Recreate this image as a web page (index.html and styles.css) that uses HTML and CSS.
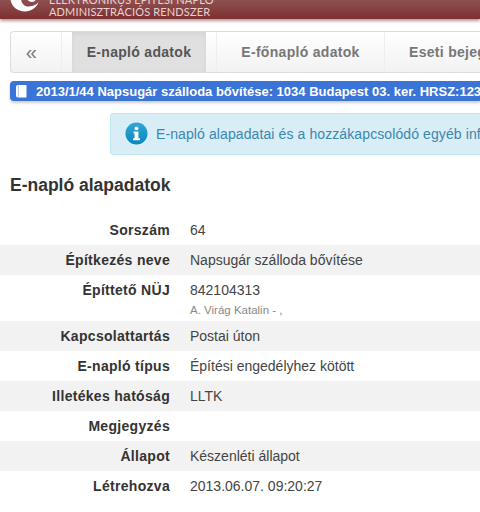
FILE: index.html
```html
<!DOCTYPE html>
<html lang="hu">
<head>
<meta charset="utf-8">
<title>E-napló adatok</title>
<link rel="stylesheet" href="styles.css">
</head>
<body>
<header class="topbar">
  <svg class="logo" viewBox="0 0 30 13" width="30" height="13"><path d="M0.5 0 C1 7 7 12.5 15 12.5 C21 12.5 26 9 28.5 3.5 C25 6.5 21 7.5 18 7.5 C14.5 7.5 11.5 4.5 11 0 Z" fill="#fff"/><path d="M17 0 C18 2 20 3 22 3 C24 3 25.5 1.5 26 0 Z" fill="#fff"/></svg>
  <div class="brand">
    <div>ELEKTRONIKUS ÉPÍTÉSI NAPLÓ</div>
    <div>ADMINISZTRÁCIÓS RENDSZER</div>
  </div>
</header>
<nav class="tabs">
  <div class="tab tab-back">«</div>
  <div class="tab tab-active">E-napló adatok</div>
  <div class="tab tab-second">E-főnapló adatok</div>
  <div class="tab tab-third">Eseti bejegyzések</div>
</nav>
<div class="crumb">
  <svg class="crumb-icon" viewBox="0 0 11 13" width="11" height="13"><path d="M2 0 H10.5 V12.5 H2 C0.8 12.5 0 11.8 0 10.5 V2 C0 0.8 0.8 0 2 0 Z" fill="#fff"/><path d="M2.4 0.6 V12" stroke="#9db9ea" stroke-width="0.8"/></svg>
  <span class="crumb-text">2013/1/44 Napsugár szálloda bővítése: 1034 Budapest 03. ker. HRSZ:12345/6</span>
</div>
<div class="alert">
  <svg class="alert-icon" viewBox="0 0 24 24" width="23" height="23"><defs><linearGradient id="g" x1="0" y1="0" x2="0" y2="1"><stop offset="0" stop-color="#2fa7d6"/><stop offset="1" stop-color="#0b86bd"/></linearGradient></defs><circle cx="12" cy="12" r="11.5" fill="url(#g)"/><circle cx="12" cy="6.6" r="2" fill="#fff"/><path d="M9 10 H14 V17 H15.5 V19 H8.5 V17 H10 V12 H9 Z" fill="#fff"/></svg>
  <span class="alert-text">E-napló alapadatai és a hozzákapcsolódó egyéb információk</span>
</div>
<h1 class="title">E-napló alapadatok</h1>
<div class="rows">
  <div class="row"><div class="label">Sorszám</div><div class="value">64</div></div>
  <div class="row row-alt"><div class="label">Építkezés neve</div><div class="value">Napsugár szálloda bővítése</div></div>
  <div class="row row-tall"><div class="label">Építtető NÜJ</div><div class="value">842104313<div class="sub">A. Virág Katalin - ,</div></div></div>
  <div class="row row-alt"><div class="label">Kapcsolattartás</div><div class="value">Postai úton</div></div>
  <div class="row"><div class="label">E-napló típus</div><div class="value">Építési engedélyhez kötött</div></div>
  <div class="row row-alt"><div class="label">Illetékes hatóság</div><div class="value">LLTK</div></div>
  <div class="row"><div class="label">Megjegyzés</div><div class="value"></div></div>
  <div class="row row-alt"><div class="label">Állapot</div><div class="value">Készenléti állapot</div></div>
  <div class="row"><div class="label">Létrehozva</div><div class="value">2013.06.07. 09:20:27</div></div>
</div>
</body>
</html>
```
FILE: styles.css
```css
* { box-sizing: border-box; }
html, body { margin: 0; padding: 0; }
body {
  width: 480px;
  height: 512px;
  overflow: hidden;
  background: #fff;
  font-family: "Liberation Sans", Arial, sans-serif;
  font-size: 14px;
  color: #333;
}
.topbar {
  height: 19px;
  display: flex;
  align-items: flex-end;
  padding-left: 10px;
  background: linear-gradient(#8f5050, #7d3030);
  box-shadow: 0 2px 3px rgba(90,20,20,0.45);
  overflow: hidden;
}
.logo { flex: none; margin-bottom: 7px; }
.brand {
  margin-left: 9px;
  margin-bottom: 1px;
  color: #e6d3d3;
  font-family: Lato, "Liberation Sans", sans-serif;
  font-size: 11px;
  line-height: 12px;
  letter-spacing: 0.15px;
  flex: none;
}
.tabs {
  display: flex;
  height: 42px;
  margin: 12px 0 0 10px;
  border: 1px solid #ddd;
  border-right: 0;
  border-radius: 4px 0 0 4px;
  background: linear-gradient(#fff, #f2f2f2);
  overflow: hidden;
  font-weight: bold;
  letter-spacing: 0.3px;
  white-space: nowrap;
  color: #777;
}
.tab { display: flex; align-items: center; justify-content: center; flex: none; }
.tab-back { width: 51px; padding-right: 9px; font-size: 20px; font-weight: normal; color: #777; border-right: 1px solid #eee; }
.tab-active { width: 134px; margin-left: 10px; background: #e0e0e0; color: #555; box-shadow: inset 0 2px 5px rgba(0,0,0,0.06); }
.tab-second { width: 169px; margin-left: 10px; border-left: 1px solid #eee; border-right: 1px solid #eee; }
.tab-third { justify-content: flex-start; padding-left: 24px; }
.crumb {
  display: flex;
  align-items: center;
  height: 20px;
  margin: 8px 0 0 10px;
  padding-left: 6px;
  background: #3a74d6;
  border-radius: 4px 0 0 4px;
  box-shadow: 0 2px 3px rgba(0,0,0,0.2);
  color: #fff;
  font-weight: bold;
  font-size: 13px;
  white-space: nowrap;
  overflow: hidden;
}
.crumb-icon { flex: none; margin-right: 9px; }
.alert {
  display: flex;
  align-items: center;
  height: 42px;
  margin: 12px 0 0 110px;
  padding-left: 14px;
  padding-bottom: 1px;
  background: #d9edf7;
  border: 1px solid #bce8f1;
  border-right: 0;
  border-radius: 4px 0 0 4px;
  color: #3a87ad;
  letter-spacing: 0.1px;
  white-space: nowrap;
  overflow: hidden;
}
.alert-icon { flex: none; margin-right: 8px; }
.title {
  margin: 20px 0 0 10px;
  font-size: 17.5px;
  line-height: 20px;
  font-weight: bold;
  color: #333;
}
.rows { margin-top: 20px; }
.row { display: flex; height: 30px; line-height: 30px; }
.row-tall { height: 46px; }
.row-alt { background: #f2f2f2; }
.label { flex: none; width: 170px; text-align: right; font-weight: bold; color: #333; letter-spacing: 0.3px; }
.value { margin-left: 20px; color: #444; }
.sub { font-size: 11.5px; line-height: 12px; color: #888; margin-top: -1px; }
```
